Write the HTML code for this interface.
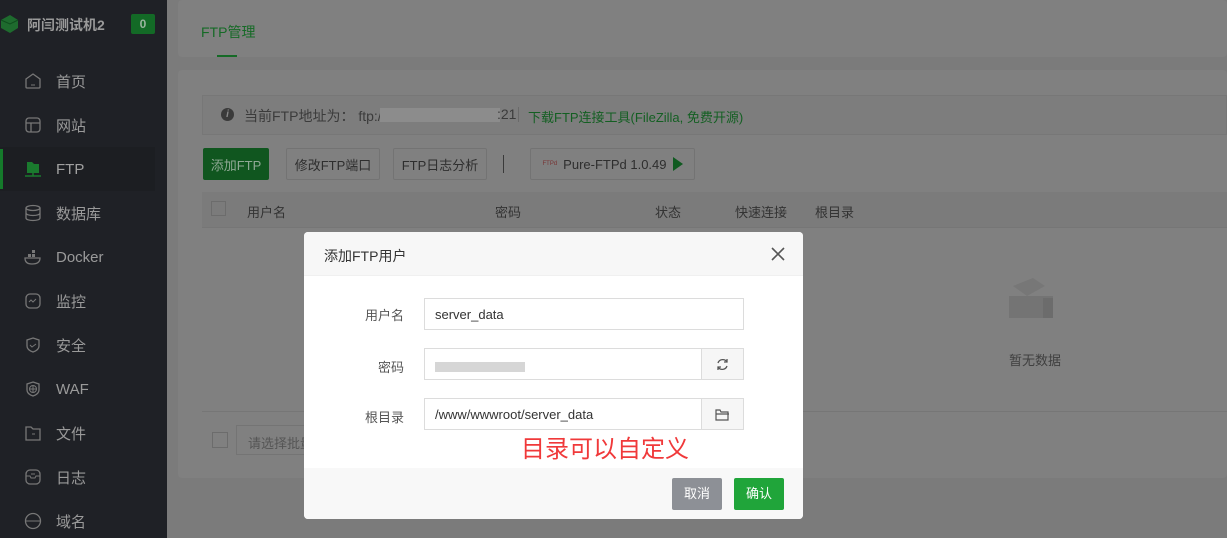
<!DOCTYPE html>
<html style="background:#7b7b7b;width:1227px;height:538px;overflow:hidden"><head><meta charset="utf-8"><style>
*{margin:0;padding:0;box-sizing:border-box}
body{width:1227px;height:538px;overflow:hidden;background:#7b7b7b;font-family:"Liberation Sans","Noto Sans CJK SC",sans-serif;position:relative;font-size:13px}
.a{position:absolute}
.sb{left:0;top:0;width:167px;height:538px;background:#1f2126}
.it{left:0;width:167px;height:44px;display:flex;align-items:center;color:#9a9a9a;font-size:15px}
.it svg{margin-left:24px;margin-right:14px}
.card{background:#808080;border-radius:4px}
.btn{border:1px solid #737373;background:#808080;color:#2e2e2e;font-size:13px;display:flex;align-items:center;justify-content:center;border-radius:2px}
.lbl{color:#555;font-size:13px;text-align:right;width:60px}
.inp{border:1px solid #dcdcdc;background:#fff;color:#333;font-size:13px;padding-left:10px;display:flex;align-items:center}
</style></head><body>
<div class="a sb">
 <div class="a" style="left:0;top:12px;width:20px;height:22px"><svg width="20" height="22"><path d="M1 8 L10 3 L18 8 L18 16 L10 21 L1 16Z" fill="#1e6b2e"/><path d="M1 8 L10 12 L18 8" stroke="#0f4d1e" fill="none"/></svg></div>
 <div class="a" style="left:27px;top:15px;color:#9a9a9a;font-size:14px;font-weight:bold">阿闫测试机2</div>
 <div class="a" style="left:131px;top:14px;width:24px;height:20px;background:#136a26;color:#9ab59f;font-size:12px;font-weight:bold;text-align:center;line-height:20px;border-radius:2px">0</div>
 <div class="a it" style="top:59px"><svg width="18" height="18"><path d="M2 7 L9 2 L16 7 V15 Q16 16 15 16 H3 Q2 16 2 15Z" stroke="#777" stroke-width="1.3" fill="none"/><path d="M7 13h4" stroke="#777"/></svg>首页</div>
 <div class="a it" style="top:103px"><svg width="18" height="18"><rect x="2" y="2" width="14" height="14" rx="3" stroke="#777" stroke-width="1.3" fill="none"/><path d="M2 7h14M7 7v9" stroke="#777" stroke-width="1.3"/></svg>网站</div>
 <div class="a" style="left:0;top:147px;width:155px;height:44px;background:#1c1e22"></div>
 <div class="a" style="left:0;top:149px;width:3px;height:40px;background:#157a2b"></div>
 <div class="a it" style="top:147px;color:#a0a0a0"><svg width="18" height="18"><path d="M3 2h5l2 2h5v9H3Z" fill="#1a7a2e"/><path d="M1 16h16M9 13v3" stroke="#1a7a2e" stroke-width="1.5"/></svg>FTP</div>
 <div class="a it" style="top:191px"><svg width="18" height="18"><ellipse cx="9" cy="4" rx="7" ry="2.5" stroke="#777" stroke-width="1.3" fill="none"/><path d="M2 4v10c0 1.5 3 2.5 7 2.5s7-1 7-2.5V4M2 9c0 1.5 3 2.5 7 2.5s7-1 7-2.5" stroke="#777" stroke-width="1.3" fill="none"/></svg>数据库</div>
 <div class="a it" style="top:235px"><svg width="18" height="18"><path d="M1 10h15c0 4-3 6-8 6S1 14 1 10Z" stroke="#777" stroke-width="1.3" fill="none"/><rect x="4" y="6" width="3" height="3" fill="#777"/><rect x="8" y="6" width="3" height="3" fill="#777"/><rect x="8" y="2" width="3" height="3" fill="#777"/></svg>Docker</div>
 <div class="a it" style="top:279px"><svg width="18" height="18"><rect x="2" y="2" width="14" height="14" rx="4" stroke="#777" stroke-width="1.3" fill="none"/><path d="M5 10l2-2 2 2 3-3" stroke="#777" fill="none"/></svg>监控</div>
 <div class="a it" style="top:323px"><svg width="18" height="18"><path d="M9 2l6 2v6c0 3-3 5-6 6-3-1-6-3-6-6V4Z" stroke="#777" stroke-width="1.3" fill="none"/><path d="M6 9l2 2 4-3" stroke="#777" fill="none"/></svg>安全</div>
 <div class="a it" style="top:367px"><svg width="18" height="18"><path d="M9 2l6 2v6c0 3-3 5-6 6-3-1-6-3-6-6V4Z" stroke="#777" stroke-width="1.3" fill="none"/><circle cx="9" cy="9" r="3.5" stroke="#777" fill="none"/><path d="M5.5 9h7M9 5.5v7" stroke="#777"/></svg>WAF</div>
 <div class="a it" style="top:411px"><svg width="18" height="18"><path d="M2 3h5l2 2h7v11H2Z" stroke="#777" stroke-width="1.3" fill="none"/><path d="M8 10h3" stroke="#777"/></svg>文件</div>
 <div class="a it" style="top:455px"><svg width="18" height="18"><rect x="2" y="2" width="14" height="14" rx="4" stroke="#777" stroke-width="1.3" fill="none"/><path d="M2 8h4l1 2h4l1-2h4M7 6h4" stroke="#777" fill="none"/></svg>日志</div>
 <div class="a it" style="top:499px"><svg width="18" height="18"><circle cx="9" cy="9" r="7.5" stroke="#777" stroke-width="1.3" fill="none"/><path d="M2 9h14" stroke="#777"/></svg>域名</div>
</div>

<div class="a card" style="left:178px;top:0;width:1049px;height:57px"></div>
<div class="a" style="left:201px;top:22px;color:#156a26;font-size:14px">FTP管理</div>
<div class="a" style="left:217px;top:55px;width:20px;height:2px;background:#156a26"></div>

<div class="a card" style="left:178px;top:70px;width:1049px;height:408px"></div>
<div class="a" style="left:202px;top:95px;width:1025px;height:40px;border:1px solid #777;background:#7d7d7d"></div>
<div class="a" style="left:221px;top:108px;width:13px;height:13px;border-radius:50%;background:#3a3a3a;color:#888;font-size:10px;text-align:center;line-height:13px;font-style:italic;font-weight:bold">i</div>
<div class="a" style="left:244px;top:106px;color:#3b3b3b;font-size:14px">当前FTP地址为：  ftp:/</div>
<div class="a" style="left:380px;top:108px;width:120px;height:14px;background:#8c8c8c"></div>
<div class="a" style="left:497px;top:106px;color:#3b3b3b;font-size:14px">:21</div>
<div class="a" style="left:518px;top:107px;width:1px;height:15px;background:#6a6a6a"></div>
<div class="a" style="left:528px;top:107px;color:#135f22;font-size:13px">下载FTP连接工具(FileZilla, 免费开源)</div>

<div class="a btn" style="left:203px;top:148px;width:66px;height:32px;background:#10561f;border-color:#10561f;color:#8fa894">添加FTP</div>
<div class="a btn" style="left:286px;top:148px;width:94px;height:32px">修改FTP端口</div>
<div class="a btn" style="left:393px;top:148px;width:94px;height:32px">FTP日志分析</div>
<div class="a" style="left:503px;top:155px;width:1px;height:18px;background:#3a3a3a"></div>
<div class="a btn" style="left:530px;top:148px;width:165px;height:32px"><span style="font-size:6px;color:#733;margin-right:6px">FTPd</span>Pure-FTPd 1.0.49 <svg width="10" height="14" style="margin-left:6px"><path d="M0 0L10 7L0 14Z" fill="#0f5a20"/></svg></div>

<div class="a" style="left:202px;top:192px;width:1025px;height:36px;background:#7b7b7b;border-bottom:1px solid #767676"></div>
<div class="a" style="left:211px;top:201px;width:15px;height:15px;border:1px solid #6c6c6c"></div>
<div class="a" style="left:247px;top:202px;color:#333">用户名</div>
<div class="a" style="left:495px;top:202px;color:#333">密码</div>
<div class="a" style="left:655px;top:202px;color:#333">状态</div>
<div class="a" style="left:735px;top:202px;color:#333">快速连接</div>
<div class="a" style="left:815px;top:202px;color:#333">根目录</div>
<svg class="a" style="left:1005px;top:276px" width="52" height="46"><path d="M4 20h44v22H4Z" fill="#747474"/><path d="M8 10l20-8 12 8-18 10Z" fill="#777"/><rect x="38" y="22" width="10" height="20" fill="#6c6c6c"/></svg>
<div class="a" style="left:1009px;top:350px;color:#3f3f3f">暂无数据</div>
<div class="a" style="left:202px;top:411px;width:1025px;height:1px;background:#767676"></div>
<div class="a" style="left:212px;top:432px;width:16px;height:16px;border:1px solid #6c6c6c"></div>
<div class="a" style="left:236px;top:425px;width:80px;height:30px;border:1px solid #747474;color:#555;padding:7px 0 0 11px">请选择批量</div>

<div class="a" style="left:304px;top:232px;width:499px;height:287px;background:#fff;border-radius:4px;overflow:hidden">
 <div class="a" style="left:0;top:0;width:499px;height:44px;background:#f7f7f7;border-bottom:1px solid #f0f0f0"></div>
 <div class="a" style="left:20px;top:14px;color:#333;font-size:14px">添加FTP用户</div>
 <svg class="a" style="left:467px;top:15px" width="14" height="14"><path d="M1 1L13 13M13 1L1 13" stroke="#555" stroke-width="1.6"/></svg>
 <div class="a lbl" style="left:40px;top:73px">用户名</div>
 <div class="a inp" style="left:120px;top:66px;width:320px;height:32px">server_data</div>
 <div class="a lbl" style="left:40px;top:125px">密码</div>
 <div class="a inp" style="left:120px;top:116px;width:278px;height:32px"><div style="width:90px;height:10px;background:#d6d6d6;margin-top:6px"></div></div>
 <div class="a" style="left:397px;top:116px;width:43px;height:32px;border:1px solid #dcdcdc;background:#f6f6f6"><svg style="margin:9px 14px" width="13" height="13"><path d="M11 4A5 5 0 0 0 2 5M2 9A5 5 0 0 0 11 8" stroke="#555" stroke-width="1.3" fill="none"/><path d="M11 1v3H8M2 12V9h3" stroke="#555" stroke-width="1.3" fill="none"/></svg></div>
 <div class="a lbl" style="left:40px;top:175px">根目录</div>
 <div class="a inp" style="left:120px;top:166px;width:278px;height:32px">/www/wwwroot/server_data</div>
 <div class="a" style="left:397px;top:166px;width:43px;height:32px;border:1px solid #dcdcdc;background:#f6f6f6"><svg style="margin:9px 13px" width="15" height="13"><path d="M1 2h4l1 2h7v8H1Z M1 6h13" stroke="#555" stroke-width="1.2" fill="none"/></svg></div>
 <div class="a" style="left:217px;top:197px;color:#f0393a;font-size:24px">目录可以自定义</div>
 <div class="a" style="left:0;top:236px;width:499px;height:51px;background:#f8f8f8"></div>
 <div class="a" style="left:368px;top:246px;width:50px;height:32px;background:#8d9096;color:#fff;border-radius:2px;text-align:center;line-height:32px;font-size:13px">取消</div>
 <div class="a" style="left:430px;top:246px;width:50px;height:32px;background:#20a53a;color:#fff;border-radius:2px;text-align:center;line-height:32px;font-size:13px">确认</div>
</div>
</body></html>
